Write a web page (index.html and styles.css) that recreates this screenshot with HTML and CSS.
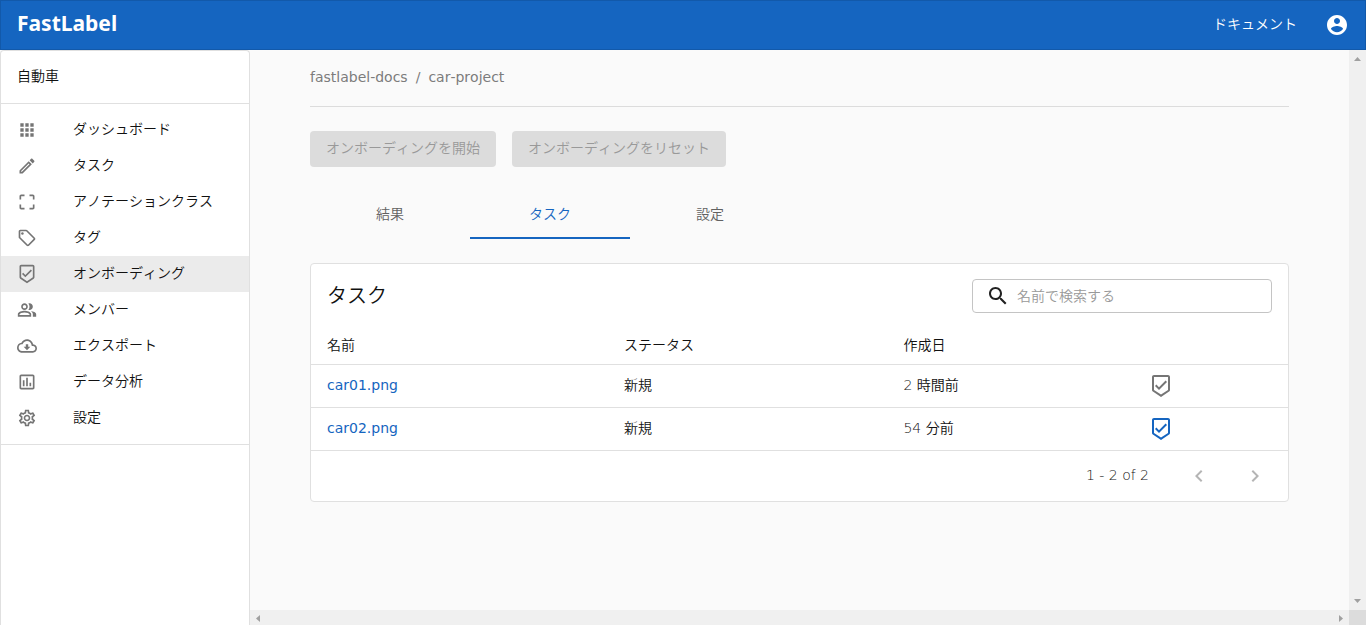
FILE: index.html
```html
<!DOCTYPE html>
<html lang="ja">
<head>
<meta charset="utf-8">
<title>FastLabel</title>
<link rel="stylesheet" href="styles.css">
</head>
<body>
<svg class="sprite" aria-hidden="true">
  <symbol id="verified" viewBox="0 0 24 24"><path d="M19 1H5c-1.1 0-1.99.9-1.99 2L3 15.93c0 .69.35 1.3.88 1.66L12 23l8.11-5.41c.53-.36.88-.97.88-1.66L21 3c0-1.1-.9-2-2-2zm-7 19.6l-7-4.66V3h14v12.93l-7 4.67zm-2.01-7.42l-2.58-2.59L6 12l4 4 8-8-1.42-1.42z"/></symbol>
</svg>
<div class="app">
  <header class="topbar">
    <a class="brand" href="#">FastLabel</a>
    <a class="docs-link" href="#">ドキュメント</a>
    <button class="icon-button account" type="button" aria-label="アカウント">
      <svg class="icon icon-lg" viewBox="0 0 24 24"><path d="M12 2C6.48 2 2 6.48 2 12s4.480 10 10 10 10-4.480 10-10S17.520 2 12 2zm0 3c1.660 0 3 1.340 3 3s-1.340 3-3 3-3-1.340-3-3 1.340-3 3-3zm0 14.200c-2.500 0-4.710-1.280-6-3.220.03-1.990 4-3.080 6-3.080 1.990 0 5.970 1.090 6 3.080-1.290 1.940-3.500 3.220-6 3.220z"/></svg>
    </button>
  </header>
  <div class="body">
    <aside class="sidebar">
      <div class="project">自動車</div>
      <nav class="menu">
        <a class="menu-item" href="#"><svg class="icon" viewBox="0 0 24 24"><path d="M4 8h4V4H4v4zm6 12h4v-4h-4v4zm-6 0h4v-4H4v4zm0-6h4v-4H4v4zm6 0h4v-4h-4v4zm6-10v4h4V4h-4zm-6 4h4V4h-4v4zm6 6h4v-4h-4v4zm0 6h4v-4h-4v4z"/></svg><span class="menu-text">ダッシュボード</span></a>
        <a class="menu-item" href="#"><svg class="icon" viewBox="0 0 24 24"><path d="M14.060 9.020l.92.92L5.920 19H5v-.92l9.060-9.060M17.660 3c-.25 0-.51.1-.7.290l-1.830 1.830 3.750 3.750 1.830-1.830c.39-.39.39-1.020 0-1.410l-2.340-2.340c-.2-.2-.45-.29-.71-.29zm-3.600 3.190L3 17.250V21h3.750L17.810 9.940l-3.750-3.750z"/></svg><span class="menu-text">タスク</span></a>
        <a class="menu-item" href="#"><svg class="icon" viewBox="0 0 24 24"><path d="M3 5v4h2V5h4V3H5c-1.100 0-2 .9-2 2zm2 10H3v4c0 1.100.9 2 2 2h4v-2H5v-4zm14 4h-4v2h4c1.100 0 2-.9 2-2v-4h-2v4zm0-16h-4v2h4v4h2V5c0-1.100-.9-2-2-2z"/></svg><span class="menu-text">アノテーションクラス</span></a>
        <a class="menu-item" href="#"><svg class="icon" viewBox="0 0 24 24"><path d="M21.410 11.580l-9-9C12.050 2.220 11.550 2 11 2H4c-1.100 0-2 .9-2 2v7c0 .55.22 1.050.59 1.420l9 9c.36.36.86.58 1.410.58s1.050-.22 1.410-.59l7-7c.37-.36.59-.86.59-1.410s-.23-1.060-.59-1.420zM13 20.010L4 11V4h7v-.01l9 9-7 7.020z"/><circle cx="6.500" cy="6.500" r="1.500"/></svg><span class="menu-text">タグ</span></a>
        <a class="menu-item selected" href="#" aria-current="page"><svg class="icon"><use href="#verified"/></svg><span class="menu-text">オンボーディング</span></a>
        <a class="menu-item" href="#"><svg class="icon" viewBox="0 0 24 24"><path d="M16.670 13.130C18.040 14.060 19 15.320 19 17v3h4v-3c0-2.180-3.570-3.470-6.330-3.870zM15 12c2.210 0 4-1.790 4-4s-1.790-4-4-4c-.47 0-.91.1-1.330.24C14.500 5.270 15 6.580 15 8s-.5 2.730-1.330 3.760c.42.14.86.24 1.330.24zM9 12c2.210 0 4-1.790 4-4s-1.790-4-4-4-4 1.790-4 4 1.790 4 4 4zm0-6c1.100 0 2 .9 2 2s-.9 2-2 2-2-.9-2-2 .9-2 2-2zm0 7c-2.670 0-8 1.340-8 4v3h16v-3c0-2.660-5.330-4-8-4zm6 5H3v-.99C3.200 16.290 6.300 15 9 15s5.800 1.290 6 2v1z"/></svg><span class="menu-text">メンバー</span></a>
        <a class="menu-item" href="#"><svg class="icon" viewBox="0 0 24 24"><path d="M19.350 10.040C18.670 6.590 15.640 4 12 4 9.110 4 6.600 5.640 5.350 8.040 2.340 8.360 0 10.910 0 14c0 3.310 2.690 6 6 6h13c2.760 0 5-2.240 5-5 0-2.640-2.050-4.780-4.650-4.960zM19 18H6c-2.210 0-4-1.790-4-4 0-2.050 1.530-3.760 3.560-3.970l1.070-.11.5-.95C8.080 7.140 9.940 6 12 6c2.620 0 4.880 1.860 5.390 4.430l.3 1.500 1.530.11c1.560.1 2.780 1.410 2.780 2.960 0 1.650-1.350 3-3 3zm-5.550-8h-2.900v3H8l4 4 4-4h-2.550z"/></svg><span class="menu-text">エクスポート</span></a>
        <a class="menu-item" href="#"><svg class="icon" viewBox="0 0 24 24"><path d="M19 3H5c-1.100 0-2 .9-2 2v14c0 1.100.9 2 2 2h14c1.100 0 2-.9 2-2V5c0-1.100-.9-2-2-2zm0 16H5V5h14v14zM7 10h2v7H7zm4-3h2v10h-2zm4 6h2v4h-2z"/></svg><span class="menu-text">データ分析</span></a>
        <a class="menu-item" href="#"><svg class="icon" viewBox="0 0 24 24"><path d="M19.430 12.980c.04-.32.07-.64.07-.98 0-.34-.03-.66-.07-.98l2.110-1.650c.19-.15.24-.42.12-.64l-2-3.460c-.09-.16-.26-.25-.44-.25-.06 0-.12.01-.17.03l-2.490 1c-.52-.4-1.080-.73-1.690-.98l-.38-2.650C14.460 2.180 14.250 2 14 2h-4c-.25 0-.46.18-.49.42l-.38 2.650c-.61.25-1.170.59-1.690.98l-2.490-1c-.06-.02-.12-.03-.18-.03-.17 0-.34.09-.43.25l-2 3.460c-.13.22-.07.49.12.64l2.110 1.650c-.04.32-.07.65-.07.98 0 .33.03.66.07.98l-2.110 1.650c-.19.15-.24.42-.12.64l2 3.460c.09.16.26.25.44.25.06 0 .12-.01.17-.03l2.490-1c.52.4 1.080.73 1.690.98l.38 2.650c.03.24.24.42.49.42h4c.25 0 .46-.18.49-.42l.38-2.650c.61-.25 1.170-.59 1.690-.98l2.490 1c.06.02.12.03.18.03.17 0 .34-.09.43-.25l2-3.460c.12-.22.07-.49-.12-.64l-2.110-1.650zm-1.980-1.710c.04.31.05.52.05.73 0 .21-.02.43-.05.73l-.14 1.130.89.7 1.080.84-.7 1.210-1.270-.51-1.040-.42-.9.68c-.43.32-.84.56-1.250.73l-1.060.43-.16 1.130-.2 1.350h-1.400l-.19-1.350-.16-1.130-1.060-.43c-.43-.18-.83-.41-1.230-.71l-.91-.7-1.060.43-1.270.51-.7-1.210 1.080-.84.89-.7-.14-1.130c-.03-.31-.05-.54-.05-.74s.02-.43.05-.73l.14-1.130-.89-.7-1.080-.84.7-1.210 1.270.51 1.040.42.9-.68c.43-.32.84-.56 1.250-.73l1.060-.43.16-1.130.2-1.350h1.390l.19 1.350.16 1.130 1.060.43c.43.18.83.41 1.230.71l.91.7 1.060-.43 1.270-.51.7 1.210-1.070.85-.89.7.14 1.130zM12 8c-2.210 0-4 1.790-4 4s1.790 4 4 4 4-1.790 4-4-1.790-4-4-4zm0 6c-1.100 0-2-.9-2-2s.9-2 2-2 2 .9 2 2-.9 2-2 2z"/></svg><span class="menu-text">設定</span></a>
      </nav>
    </aside>
    <div class="viewport">
      <main class="content">
        <nav class="breadcrumb" aria-label="パンくず">
          <a href="#">fastlabel-docs</a><span>/</span><a href="#">car-project</a>
        </nav>
        <div class="actions">
          <button class="button" type="button" disabled>オンボーディングを開始</button>
          <button class="button" type="button" disabled>オンボーディングをリセット</button>
        </div>
        <div class="tabs" role="tablist">
          <button class="tab" type="button" role="tab" aria-selected="false">結果</button>
          <button class="tab active" type="button" role="tab" aria-selected="true">タスク</button>
          <button class="tab" type="button" role="tab" aria-selected="false">設定</button>
        </div>
        <section class="card">
          <div class="card-head">
            <h2 class="card-title">タスク</h2>
            <label class="search">
              <svg class="icon icon-lg" viewBox="0 0 24 24"><path d="M15.500 14h-.79l-.28-.27C15.410 12.590 16 11.110 16 9.500 16 5.910 13.090 3 9.500 3S3 5.910 3 9.500 5.910 16 9.500 16c1.610 0 3.090-.59 4.230-1.570l.27.28v.79l5 4.990L20.490 19l-4.990-5zm-6 0C7.010 14 5 11.990 5 9.500S7.010 5 9.500 5 14 7.010 14 9.500 11.990 14 9.500 14z"/></svg>
              <input class="search-input" type="text" placeholder="名前で検索する" aria-label="名前で検索する">
            </label>
          </div>
          <table class="tasks">
            <colgroup><col class="col-name"><col class="col-status"><col class="col-date"><col></colgroup>
            <thead>
              <tr><th>名前</th><th>ステータス</th><th>作成日</th><th></th></tr>
            </thead>
            <tbody>
              <tr>
                <td><a class="link" href="#">car01.png</a></td><td>新規</td><td>2 時間前</td>
                <td class="check"><button class="icon-button" type="button" aria-label="car01.png を確認"><svg class="icon icon-lg"><use href="#verified"/></svg></button></td>
              </tr>
              <tr>
                <td><a class="link" href="#">car02.png</a></td><td>新規</td><td>54 分前</td>
                <td class="check"><button class="icon-button primary" type="button" aria-label="car02.png を確認"><svg class="icon icon-lg"><use href="#verified"/></svg></button></td>
              </tr>
            </tbody>
          </table>
          <div class="pager">
            <span class="range">1 - 2 of 2</span>
            <button class="icon-button" type="button" disabled aria-label="前のページ"><svg class="icon icon-lg" viewBox="0 0 24 24"><path d="M15.410 7.410L14 6l-6 6 6 6 1.410-1.410L10.830 12z"/></svg></button>
            <button class="icon-button" type="button" disabled aria-label="次のページ"><svg class="icon icon-lg" viewBox="0 0 24 24"><path d="M10 6L8.590 7.410 13.170 12l-4.580 4.590L10 18l6-6z"/></svg></button>
          </div>
        </section>
      </main>
      <div class="scroll-y" aria-hidden="true">
        <svg class="arrow" viewBox="0 0 8 8"><path d="M0 6h7L3.500 2z"/></svg>
        <svg class="arrow" viewBox="0 0 8 8"><path d="M0 2h7L3.500 6z"/></svg>
      </div>
      <div class="scroll-x" aria-hidden="true">
        <svg class="arrow" viewBox="0 0 8 8"><path d="M6 1v7L2 4.500z"/></svg>
        <svg class="arrow" viewBox="0 0 8 8"><path d="M2 1v7L6 4.500z"/></svg>
      </div>
      <div class="scroll-corner"></div>
    </div>
  </div>
</div>
</body>
</html>
```

FILE: styles.css
```css
* { box-sizing: border-box; }

body {
  margin: 0;
  background: #fafafa;
  color: #111;
  font-family: "DejaVu Sans", "Noto Sans CJK JP", sans-serif;
  font-size: 14px;
  font-weight: 350;
  font-kerning: none;
  line-height: 20px;
}

a { color: inherit; text-decoration: none; }

button, input { font: inherit; font-kerning: none; color: inherit; }

.sprite { display: none; }

.icon {
  display: block;
  flex: none;
  width: 20px;
  height: 20px;
  fill: currentColor;
}

.icon-lg { width: 24px; height: 24px; }

.icon-button {
  display: block;
  padding: 0;
  border: 0;
  background: none;
  color: #757575;
}

.icon-button:disabled { color: #b5b5b5; }

.icon-button.primary { color: #1565c0; }

.app {
  display: flex;
  flex-direction: column;
  height: 100vh;
}

.topbar {
  display: flex;
  align-items: center;
  flex: none;
  height: 50px;
  padding: 0 16px;
  border: 1px solid #1259aa;
  background: #1565c0;
  color: #fff;
}

.brand {
  margin-right: auto;
  font-family: "Noto Sans", sans-serif;
  font-size: 21px;
  font-weight: 700;
  line-height: 28px;
  padding-bottom: 4px;
}

.docs-link { padding-bottom: 2px; }

.account { margin-left: 28px; color: #fff; }

.body {
  display: flex;
  flex: 1;
  min-height: 0;
}

.sidebar {
  flex: none;
  width: 250px;
  border: 1px solid #e0e0e0;
  border-bottom: 0;
  border-radius: 4px 4px 0 0;
  background: #fff;
}

.project {
  padding: 15px 16px 17px;
  border-bottom: 1px solid #e0e0e0;
}

.menu {
  padding: 8px 0;
  border-bottom: 1px solid #e0e0e0;
}

.menu-item {
  display: flex;
  align-items: center;
  gap: 36px;
  height: 36px;
  padding: 0 16px;
}

.menu-item .icon { color: #757575; }

.menu-text { padding-bottom: 3px; }

.menu-item.selected { background: #ebebeb; }

.viewport {
  display: grid;
  flex: 1;
  grid-template-columns: minmax(0, 1fr) 17px;
  grid-template-rows: minmax(0, 1fr) 15px;
}

.content { padding: 0 60px; overflow: hidden; }

.scroll-y, .scroll-x {
  display: flex;
  align-items: center;
  justify-content: space-between;
  background: #f0f0f0;
}

.scroll-y { flex-direction: column; padding: 5px 0; }
.scroll-x { padding: 0 4px; }
.scroll-corner { background: #dcdcdc; }

.arrow { display: block; width: 8px; height: 8px; fill: #a0a0a0; }

.breadcrumb {
  display: flex;
  gap: 8px;
  padding: 17px 0 19px;
  border-bottom: 1px solid #dcdcdc;
  color: #7c7c7c;
  font-weight: 400;
}

.actions { display: flex; gap: 16px; padding: 24px 0; }

.button {
  height: 36px;
  padding: 0 16px 2px;
  border: 0;
  border-radius: 4px;
  background: #dcdcdc;
  color: #999;
}

.tabs { display: flex; }

.tab {
  width: 160px;
  height: 48px;
  padding: 0;
  border: 0;
  border-bottom: 2px solid transparent;
  background: none;
  color: #616161;
}

.tab.active { border-color: #1565c0; color: #1565c0; }

.card {
  margin-top: 24px;
  border: 1px solid #e0e0e0;
  border-radius: 4px;
  background: #fff;
}

.card-head {
  display: flex;
  justify-content: space-between;
  align-items: center;
  padding: 15px 16px 12px;
}

.card-title {
  margin: 0;
  font-size: 20px;
  font-weight: 350;
  line-height: 28px;
}

.search {
  display: flex;
  align-items: center;
  gap: 7px;
  width: 300px;
  height: 34px;
  padding: 0 13px;
  border: 1px solid #c4c4c4;
  border-radius: 4px;
}

.search .icon { color: #212121; }

.search-input {
  flex: 1;
  min-width: 0;
  padding: 0;
  border: 0;
  outline: 0;
  background: none;
}

.search-input::placeholder { color: #999; opacity: 1; }

.tasks {
  width: 100%;
  table-layout: fixed;
  border-collapse: collapse;
}

.col-name { width: 30.4%; }
.col-status { width: 28.6%; }
.col-date { width: 25.1%; }

.tasks th, .tasks td {
  height: 43px;
  padding: 0 16px 1px;
  border-bottom: 1px solid #e0e0e0;
  text-align: left;
  font-weight: 350;
}

.tasks th { height: 39px; padding: 1px 16px 0; }

.tasks .check { padding-bottom: 0; }

.link { color: #1565c0; font-weight: 400; }

.pager {
  display: flex;
  align-items: center;
  justify-content: flex-end;
  gap: 32px;
  height: 50px;
  padding: 0 21px;
}

.range { padding-bottom: 2px; margin-right: 6px; }
```
